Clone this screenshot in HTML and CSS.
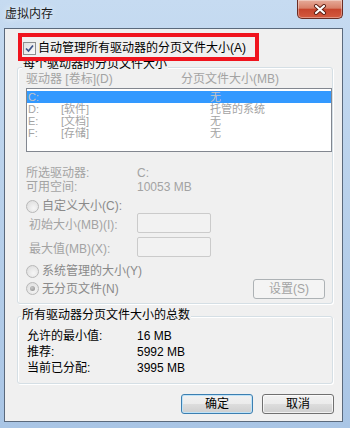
FILE: index.html
```html
<!DOCTYPE html>
<html lang="zh-CN">
<head>
  <meta charset="UTF-8" />
  <meta name="viewport" content="width=device-width, initial-scale=1.0"/>
  <title>虚拟内存</title>
  <link rel="stylesheet" href="styles.css">
</head>
<body>
  <header class="titlebar">
    <span class="title">虚拟内存</span>
    <button class="close" aria-label="关闭">
      <svg width="14" height="11" viewBox="0 0 14 11">
        <path d="M3 2 L11 9 M11 2 L3 9" stroke="#5b1d12" stroke-width="4" stroke-linecap="round"/>
        <path d="M3 2 L11 9 M11 2 L3 9" stroke="#ffffff" stroke-width="2.2" stroke-linecap="round"/>
      </svg>
    </button>
  </header>

  <main class="client">
    <label class="auto">
      <span class="checkbox">
        <svg width="9" height="9" viewBox="0 0 9 9">
          <path d="M1 4.5 L3.5 7 L8 1.5" fill="none" stroke="#3d5188" stroke-width="1.7"/>
        </svg>
      </span>
      <span>自动管理所有驱动器的分页文件大小(A)</span>
    </label>

    <section class="group drives">
      <div class="legend">每个驱动器的分页文件大小</div>
      <div class="cols"><span class="col-drive">驱动器 [卷标](D)</span><span>分页文件大小(MB)</span></div>
      <ul class="list">
        <li class="selected"><span class="c1">C:</span><span class="c2"></span><span>无</span></li>
        <li><span class="c1">D:</span><span class="c2">[软件]</span><span>托管的系统</span></li>
        <li><span class="c1">E:</span><span class="c2">[文档]</span><span>无</span></li>
        <li><span class="c1">F:</span><span class="c2">[存储]</span><span>无</span></li>
      </ul>

      <div class="info first"><span class="key">所选驱动器:</span><span>C:</span></div>
      <div class="info"><span class="key">可用空间:</span><span>10053 MB</span></div>

      <div class="option custom"><span class="radio"></span>自定义大小(C):</div>
      <div class="size"><span class="key">初始大小(MB)(I):</span><span class="input"></span></div>
      <div class="size second"><span class="key">最大值(MB)(X):</span><span class="input"></span></div>
      <div class="option system"><span class="radio"></span>系统管理的大小(Y)</div>
      <div class="option nofile">
        <span class="opt-label"><span class="radio checked"></span>无分页文件(N)</span>
        <button class="btn set" disabled>设置(S)</button>
      </div>
    </section>

    <section class="group totals">
      <div class="legend">所有驱动器分页文件大小的总数</div>
      <div class="total first"><span class="key">允许的最小值:</span><span>16 MB</span></div>
      <div class="total"><span class="key">推荐:</span><span>5992 MB</span></div>
      <div class="total"><span class="key">当前已分配:</span><span>3995 MB</span></div>
    </section>

    <div class="actions">
      <button class="btn default">确定</button>
      <button class="btn">取消</button>
    </div>
  </main>

  <div class="mark"></div>
</body>
</html>
```

FILE: styles.css
```css
body {
  margin: 0;
  width: 350px;
  height: 428px;
  overflow: hidden;
  position: relative;
  font-family: "Liberation Sans", "Noto Sans CJK SC", sans-serif;
  font-size: 12px;
  color: #000;
  background: linear-gradient(180deg, #c6dbf1 0%, #b9d1eb 45%, #a9c5e5 100%);
}

.titlebar {
  display: flex;
  justify-content: space-between;
  align-items: flex-start;
  height: 28px;
}

.title {
  padding-left: 5px;
  line-height: 28px;
  color: #1a1a1a;
  text-shadow: 0 0 6px rgba(255,255,255,0.9);
}

.close {
  width: 46px;
  height: 19px;
  margin-right: 7px;
  padding: 0;
  display: flex;
  align-items: center;
  justify-content: center;
  border: 1px solid #6a2d24;
  border-top: none;
  border-radius: 0 0 5px 5px;
  background: linear-gradient(180deg, #e6ab9a 0%, #d88069 45%, #c7452d 52%, #d45a3f 100%);
  box-shadow: inset 0 0 0 1px rgba(255,255,255,0.35);
}

.client {
  box-sizing: border-box;
  margin-left: 4px;
  width: 339px;
  height: 394px;
  border: 1px solid #5a697c;
  background: #f0f0f0;
  display: flex;
  flex-direction: column;
}

/* checkbox row */
.auto {
  display: flex;
  align-items: center;
  gap: 2px;
  height: 13px;
  margin: 13px 0 0 18px;
  line-height: 13px;
}

.checkbox {
  box-sizing: border-box;
  width: 13px;
  height: 13px;
  border: 1px solid #8e8f8f;
  background: linear-gradient(135deg, #dedede, #fbfbfb);
  display: flex;
  align-items: center;
  justify-content: center;
}

/* group boxes */
.group {
  box-sizing: border-box;
  width: 316px;
  margin-left: 12px;
  border: 1px solid #d5dfe5;
  border-radius: 3px;
  box-shadow: inset 1px 1px 0 #fff, 1px 1px 0 #fff;
  display: flex;
  flex-direction: column;
  padding: 0 0 5px 8px;
}

.drives {
  margin-top: 12px;
}

.totals {
  margin-top: 12px;
  padding-bottom: 7px;
}

.legend {
  align-self: flex-start;
  margin: -11px 0 0 -4px;
  padding: 0 1px;
  line-height: 14px;
  background: #f0f0f0;
}

.totals .legend {
  margin-top: -9px;
  margin-left: -5px;
}

.cols {
  display: flex;
  margin-top: 1px;
  line-height: 14px;
  color: #a3a3a3;
}

.col-drive {
  width: 155px;
}

.list {
  box-sizing: border-box;
  width: 306px;
  height: 64px;
  margin: 2px 0 0;
  padding: 2px 0 0;
  list-style: none;
  border: 1px solid #828790;
  background: #fff;
  color: #a3a3a3;
  font-size: 11px;
}

.list li {
  display: flex;
  height: 12px;
  line-height: 12px;
}

.list li.selected {
  background: #3399ff;
  color: #c4c4c4;
}

.c1 {
  width: 33px;
  padding-left: 1px;
}

.c2 {
  width: 149px;
}

.info {
  display: flex;
  line-height: 14px;
  color: #a3a3a3;
}

.info.first {
  margin-top: 14px;
}

.info .key {
  width: 111px;
}

.option {
  display: flex;
  align-items: center;
  gap: 3px;
  line-height: 14px;
  color: #8a8a8a;
}

.custom {
  margin-top: 5px;
}

.system {
  margin-top: 7px;
}

.nofile {
  margin-top: 1px;
  height: 19px;
  justify-content: space-between;
  padding-right: 7px;
}

.opt-label {
  display: flex;
  align-items: center;
  gap: 3px;
}

.radio {
  box-sizing: border-box;
  width: 13px;
  height: 13px;
  border-radius: 50%;
  border: 1px solid #b8b8b8;
  background: radial-gradient(circle at 60% 65%, #f6f6f6 0%, #e2e2e2 70%, #d4d4d4 100%);
  display: flex;
  align-items: center;
  justify-content: center;
}

.radio.checked::after {
  content: "";
  width: 5px;
  height: 5px;
  border-radius: 50%;
  background: radial-gradient(circle at 40% 35%, #c8c8c8, #8a8a8a);
}

.size {
  display: flex;
  align-items: center;
  height: 20px;
  margin-top: 0;
  padding-left: 3px;
  color: #a3a3a3;
}

.size.second {
  margin-top: 4px;
}

.size .key {
  width: 108px;
}

.input {
  box-sizing: border-box;
  width: 74px;
  height: 20px;
  border: 1px solid #cbcbcb;
  border-radius: 2px;
  background: #f2f2f2;
}

.total {
  display: flex;
  line-height: 16px;
  padding-left: 1px;
}

.total.first {
  margin-top: 6px;
}

.total .key {
  width: 110px;
}

/* buttons */
.btn {
  box-sizing: border-box;
  width: 72px;
  height: 20px;
  padding: 0;
  font-family: inherit;
  font-size: 12px;
  line-height: 18px;
  color: #000;
  border: 1px solid #707070;
  border-radius: 3px;
  background: linear-gradient(180deg, #f2f2f2 0%, #ebebeb 50%, #dddddd 50%, #cfcfcf 100%);
  box-shadow: inset 0 0 0 1px rgba(255,255,255,0.7);
}

.btn.default {
  border-color: #3c7fb1;
  box-shadow: inset 0 0 0 1px #bfe3f8;
}

.btn.set {
  border-color: #adb2b5;
  background: #f4f4f4;
  color: #a3a3a3;
  box-shadow: none;
}

.actions {
  display: flex;
  justify-content: flex-end;
  gap: 9px;
  margin-top: 10px;
  padding-right: 8px;
}

/* red annotation frame over the checkbox */
.mark {
  position: absolute;
  left: 18px;
  top: 33px;
  width: 241px;
  height: 28px;
  box-sizing: border-box;
  border: 4px solid #f0141e;
  z-index: 2;
}
```
